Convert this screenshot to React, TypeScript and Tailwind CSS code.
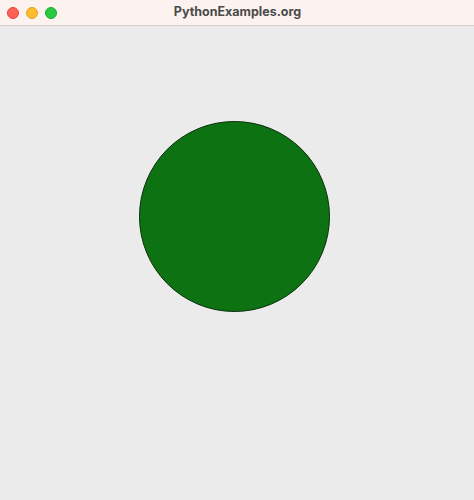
import React from "react";

export default function App() {
  return (
    <div className="w-[474px] h-[500px] flex flex-col bg-[#ebebeb] overflow-hidden" style={{ fontFamily: "Inter, 'Liberation Sans', sans-serif" }}>
      <div className="relative h-[26px] shrink-0 bg-[#fcf3f0] border-b border-[#d6d0ce] flex items-center justify-center">
        <div className="absolute left-[7px] top-[7px] flex gap-[7px]">
          <div className="w-[12px] h-[12px] rounded-full bg-[#fe5f57] border border-[#e0443e]" />
          <div className="w-[12px] h-[12px] rounded-full bg-[#febc2e] border border-[#dea123]" />
          <div className="w-[12px] h-[12px] rounded-full bg-[#28c840] border border-[#1aab29]" />
        </div>
        <span className="text-[12.5px] font-bold text-[#4a4a4a] pl-[1px]">PythonExamples.org</span>
      </div>
      <div className="flex-1 flex justify-start pt-[95px] pl-[139px]">
        <div className="w-[191px] h-[191px] rounded-full bg-[#0d7211] border border-[#0a2e0a]" />
      </div>
    </div>
  );
}
